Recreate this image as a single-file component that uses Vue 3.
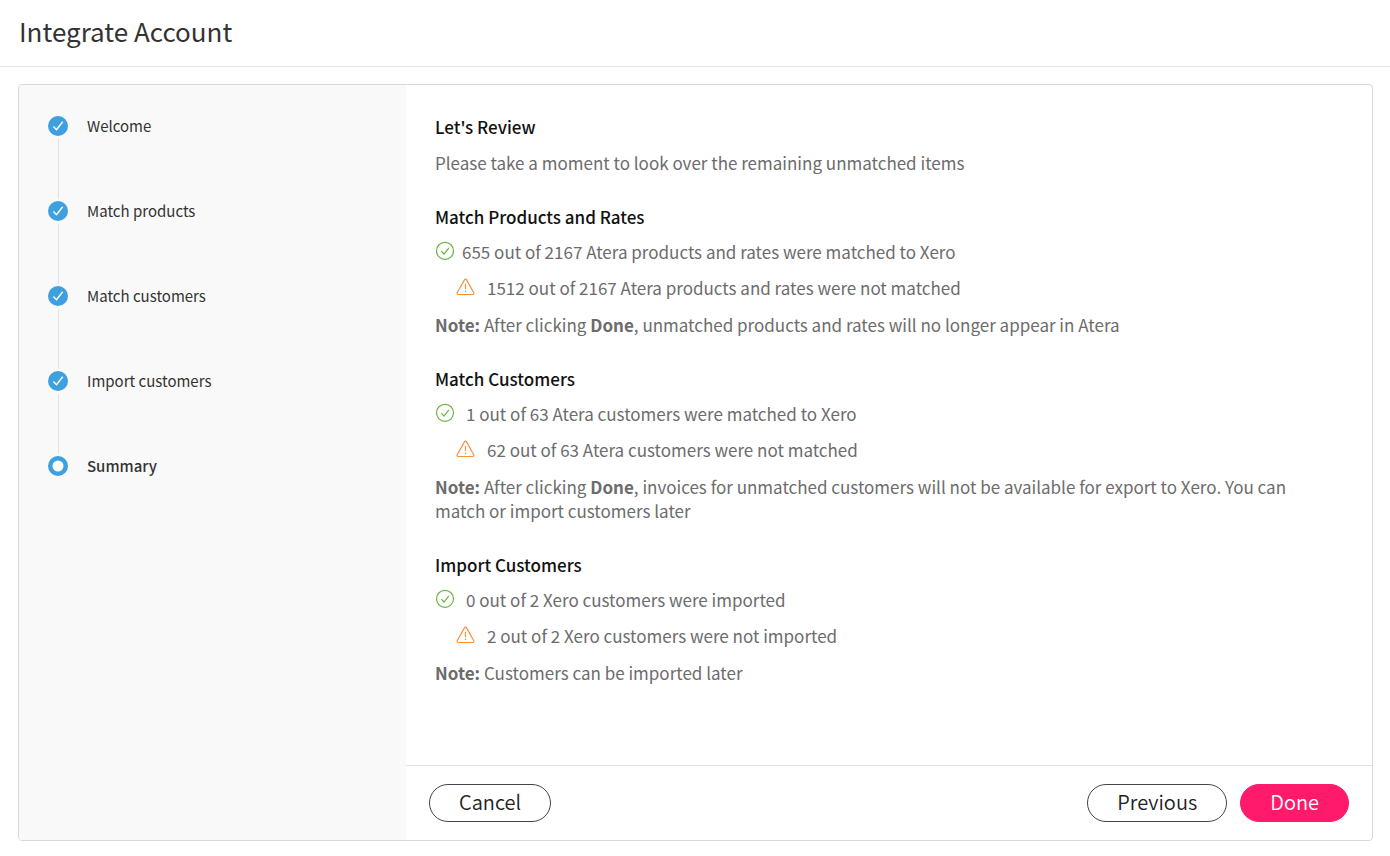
<script setup>
const steps = [
  { name: "Welcome", done: true },
  { name: "Match products", done: true },
  { name: "Match customers", done: true },
  { name: "Import customers", done: true },
  { name: "Summary", done: false },
];

const sections = [
  {
    title: "Match Products and Rates",
    ok: "655 out of 2167 Atera products and rates were matched to Xero",
    warn: "1512 out of 2167 Atera products and rates were not matched",
    done: true,
    note: ", unmatched products and rates will no longer appear in Atera",
    tight: true,
  },
  {
    title: "Match Customers",
    ok: "1 out of 63 Atera customers were matched to Xero",
    warn: "62 out of 63 Atera customers were not matched",
    done: true,
    note: ", invoices for unmatched customers will not be available for export to Xero. You can match or import customers later",
  },
  {
    title: "Import Customers",
    ok: "0 out of 2 Xero customers were imported",
    warn: "2 out of 2 Xero customers were not imported",
    done: false,
    note: "Customers can be imported later",
  },
];
</script>

<template>
  <div class="page">
    <header class="header">
      <h1>Integrate Account</h1>
    </header>

    <main class="wizard">
      <ol class="steps">
        <li v-for="step in steps" :key="step.name" class="step" :class="{ current: !step.done }">
          <span class="marker">
            <svg v-if="step.done" viewBox="0 0 20 20" width="20" height="20">
              <circle cx="10" cy="10" r="10" fill="#3ea0de" />
              <path d="M5.4 10.6l3.1 3.1 6.2-7.9" fill="none" stroke="#fff" stroke-width="1.4" />
            </svg>
            <svg v-else viewBox="0 0 20 20" width="20" height="20">
              <circle cx="10" cy="10" r="7.75" fill="#fff" stroke="#3ea0de" stroke-width="4.5" />
            </svg>
          </span>
          <span>{{ step.name }}</span>
        </li>
      </ol>

      <div class="content">
        <div class="review">
          <section class="intro">
            <h2>Let's Review</h2>
            <p>Please take a moment to look over the remaining unmatched items</p>
          </section>

          <section v-for="section in sections" :key="section.title">
            <h2>{{ section.title }}</h2>
            <p class="line ok" :class="{ tight: section.tight }">
              <svg viewBox="0 0 20 20" width="20" height="20" fill="none" stroke="#6cb33f" stroke-width="1.2">
                <circle cx="10" cy="10.8" r="8.5" />
                <path d="M6.3 11.2l2.7 2.8 4.9-6.2" />
              </svg>
              <span>{{ section.ok }}</span>
            </p>
            <p class="line warn">
              <svg viewBox="0 0 20 20" width="20" height="20" fill="none" stroke="#f5923e" stroke-width="1.2">
                <path
                  d="M8.6 3.6L1.2 16.8C.8 17.7 1.3 18.5 2.2 18.5H16.8C17.7 18.5 18.2 17.7 17.8 16.8L10.4 3.6C10 2.9 9 2.9 8.6 3.6Z"
                  stroke-linejoin="round"
                />
                <path d="M9.5 7.8v5.2M9.5 14.6v1.5" />
              </svg>
              <span>{{ section.warn }}</span>
            </p>
            <p class="note">
              <strong>Note:</strong>{{ " " }}<template v-if="section.done">After clicking <strong>Done</strong></template>{{ section.note }}
            </p>
          </section>
        </div>

        <footer class="actions">
          <button type="button">Cancel</button>
          <div class="forward">
            <button type="button">Previous</button>
            <button type="button" class="primary">Done</button>
          </div>
        </footer>
      </div>
    </main>
  </div>
</template>

<style>
body {
  margin: 0;
  background: #fff;
}
</style>

<style scoped>
.page {
  min-height: 100vh;
  box-sizing: border-box;
  display: flex;
  flex-direction: column;
  padding-bottom: 15px;
  font-family: "Source Sans Pro", "Noto Sans CJK SC", sans-serif;
  color: #6c6c6c;
}

.header {
  padding: 11px 19px 15px;
  border-bottom: 1px solid #e6e6e6;
}

h1 {
  margin: 0;
  font-size: 26px;
  line-height: 40px;
  font-weight: 400;
  color: #333;
}

.wizard {
  flex: 1;
  display: flex;
  margin: 17px 17px 0 18px;
  border: 1px solid #d8d8d8;
  border-radius: 4px;
  overflow: hidden;
}

.steps {
  width: 387px;
  flex-shrink: 0;
  box-sizing: border-box;
  margin: 0;
  padding: 29px;
  list-style: none;
  background: #f9f9f9;
  font-size: 15px;
  line-height: 24px;
  color: #333;
}

.step {
  display: flex;
  gap: 19px;
  min-height: 85px;
}

.marker {
  display: flex;
  flex-direction: column;
  align-items: center;
  padding-top: 2px;
}

.marker svg {
  flex-shrink: 0;
}

.step:not(:last-child) .marker::after {
  content: "";
  flex: 1;
  width: 1px;
  margin-top: 3px;
  background: #e2e2e2;
}

.step.current {
  font-weight: 500;
}

.content {
  flex: 1;
  min-width: 0;
  display: flex;
  flex-direction: column;
}

.review {
  flex: 1;
  padding: 30px 50px 30px 29px;
  font-size: 17px;
  line-height: 24px;
}

section {
  margin-bottom: 30px;
}

h2 {
  margin: 0 0 11px;
  font-size: 17px;
  line-height: 24px;
  font-weight: 500;
  color: #111;
}

.intro h2 {
  margin-bottom: 12px;
}

p {
  margin: 0;
}

.line {
  display: flex;
  margin-bottom: 12px;
}

.line svg {
  flex-shrink: 0;
}

.ok {
  gap: 11px;
}

.ok.tight {
  gap: 7px;
}

.warn {
  margin-bottom: 13px;
  padding-left: 21px;
  gap: 11px;
}

strong {
  font-weight: 700;
}

.actions {
  display: flex;
  justify-content: space-between;
  padding: 18px 23px;
  border-top: 1px solid #e0e0e0;
}

.forward {
  display: flex;
  gap: 13px;
}

button {
  height: 38px;
  padding: 0 29px 2px;
  border: 1px solid #444;
  border-radius: 19px;
  background: #fff;
  font-family: inherit;
  font-size: 20px;
  line-height: 34px;
  font-weight: 350;
  color: #222;
  cursor: pointer;
}

button.primary {
  border-color: #ff1a6c;
  background: #ff1a6c;
  color: #fff;
}
</style>
